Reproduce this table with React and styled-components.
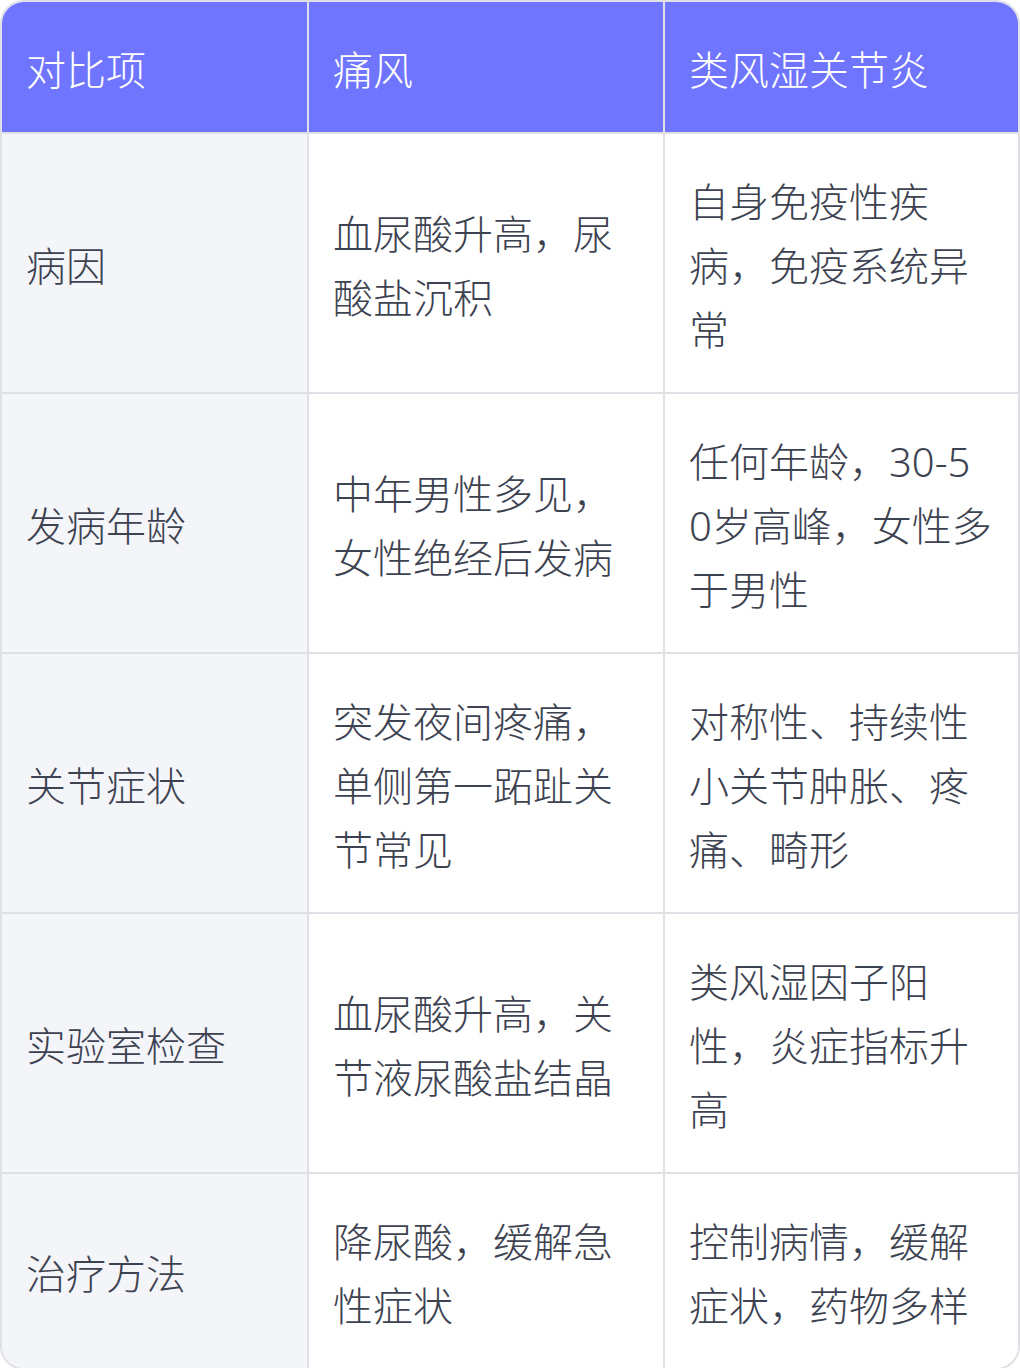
import React from "react";
import styled, { createGlobalStyle } from "styled-components";

const rows = [
  ["病因", "血尿酸升高，尿酸盐沉积", "自身免疫性疾病，免疫系统异常"],
  ["发病年龄", "中年男性多见，女性绝经后发病", "任何年龄，30-50岁高峰，女性多于男性"],
  ["关节症状", "突发夜间疼痛，单侧第一跖趾关节常见", "对称性、持续性小关节肿胀、疼痛、畸形"],
  ["实验室检查", "血尿酸升高，关节液尿酸盐结晶", "类风湿因子阳性，炎症指标升高"],
  ["治疗方法", "降尿酸，缓解急性症状", "控制病情，缓解症状，药物多样"],
];

const headers = ["对比项", "痛风", "类风湿关节炎"];

const GlobalStyle = createGlobalStyle`
  body {
    margin: 0;
    background: #ffffff;
    font-family: "Noto Sans", "Noto Sans CJK SC", sans-serif;
  }
`;

const Table = styled.div`
  display: grid;
  grid-template-columns: 307px 356px 1fr;
  width: 1020px;
  box-sizing: border-box;
  border: 2px solid #dfe0e6;
  border-radius: 24px;
  overflow: hidden;
`;

const Cell = styled.div`
  display: flex;
  align-items: center;
  box-sizing: border-box;
  padding: 36px 25px 30px 24px;
  font-size: 40px;
  font-weight: 300;
  line-height: 64px;
  word-break: break-all;
  color: ${(p) => (p.$head ? "#ffffff" : "#3d4251")};
  background: ${(p) => (p.$head ? "#7075ff" : p.$first ? "#f4f5f9" : "#ffffff")};
  border-right: ${(p) => (p.$last ? "none" : "2px solid #dfe0e6")};
  border-bottom: ${(p) => (p.$bottom ? "none" : "2px solid #dfe0e6")};
`;

const App = () => {
  return (
    <>
      <GlobalStyle />
      <Table>
        {headers.map((h, i) => (
          <Cell key={h} $head $last={i === 2}>
            {h}
          </Cell>
        ))}
        {rows.map((row, r) =>
          row.map((text, c) => (
            <Cell
              key={r + "-" + c}
              $first={c === 0}
              $last={c === 2}
              $bottom={r === rows.length - 1}
            >
              {text}
            </Cell>
          ))
        )}
      </Table>
    </>
  );
};

export default App;
